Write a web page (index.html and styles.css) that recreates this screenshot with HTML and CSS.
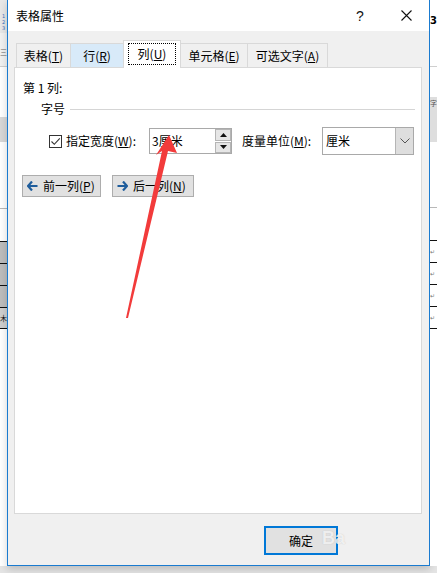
FILE: index.html
```html
<!DOCTYPE html>
<html lang="zh-CN">
<head>
<meta charset="utf-8">
<title>表格属性</title>
<link rel="stylesheet" href="styles.css">
</head>
<body>
<div class="screen">
  <div class="side side-left">
    <div class="s-ruler"><span>1</span><span>2</span><span>3</span></div>
    <div class="s-top2"><span class="s-glyph">三</span></div>
    <div class="s-line"></div>
    <div class="s-white h50"></div>
    <div class="s-band"></div>
    <div class="s-white h66"></div>
    <div class="s-line dark1"></div>
    <div class="s-white h32"></div>
    <div class="s-rule"></div>
    <div class="s-cell gray"></div>
    <div class="s-rule"></div>
    <div class="s-cell gray"></div>
    <div class="s-rule"></div>
    <div class="s-cell gray"></div>
    <div class="s-rule"></div>
    <div class="s-cell light"><span class="s-mu">木</span></div>
    <div class="s-rule"></div>
    <div class="s-rest"></div>
  </div>

  <div class="dialog">
    <div class="titlebar">
      <span class="title">表格属性</span>
      <span class="tb-btn help">?</span>
      <span class="tb-btn close">
        <svg width="11" height="11" viewBox="0 0 11 11"><path d="M0.5 0.5 L10.5 10.5 M10.5 0.5 L0.5 10.5" stroke="#111" stroke-width="1.1" fill="none"/></svg>
      </span>
    </div>
    <div class="body">
      <div class="tabs">
        <div class="tab t1"><span>表格(<u>T</u>)</span></div>
        <div class="tab t2 hover"><span>行(<u>R</u>)</span></div>
        <div class="tab t3 active"><span class="focus"><span>列(<u>U</u>)</span></span></div>
        <div class="tab t4"><span>单元格(<u>E</u>)</span></div>
        <div class="tab t5"><span>可选文字(<u>A</u>)</span></div>
      </div>
      <div class="panel">
        <div class="colhead">第 1 列:</div>
        <div class="group"><span>字号</span><span class="group-line"></span></div>
        <div class="row">
          <span class="checkbox">
            <svg width="11" height="11" viewBox="0 0 11 11"><path d="M1.5 5.5 L4.3 8.3 L9.8 2.3" stroke="#333" stroke-width="1.1" fill="none"/></svg>
          </span>
          <span class="lbl lbl1">指定宽度(<u>W</u>):</span>
          <span class="spin">
            <span class="spin-val">3厘米</span>
            <span class="spin-btns">
              <span class="sb"><svg width="7" height="4" viewBox="0 0 7 4"><path d="M0 4 L3.5 0 L7 4 Z" fill="#111"/></svg></span>
              <span class="sb"><svg width="7" height="4" viewBox="0 0 7 4"><path d="M0 0 L3.5 4 L7 0 Z" fill="#111"/></svg></span>
            </span>
          </span>
          <span class="lbl lbl2">度量单位(<u>M</u>):</span>
          <span class="select">
            <span class="sel-val">厘米</span>
            <span class="sel-btn"><svg width="10" height="6" viewBox="0 0 10 6"><path d="M0.5 0.5 L5 5 L9.5 0.5" stroke="#555" stroke-width="1" fill="none"/></svg></span>
          </span>
        </div>
        <div class="navrow">
          <span class="navbtn prev">
            <svg class="ico" width="11" height="10" viewBox="0 0 11 10"><path d="M5 0.5 L1 5 L5 9.5 M1 5 L10.5 5" stroke="#1f5d9c" stroke-width="2.2" fill="none"/></svg>
            <span class="navtxt">前一列(<u>P</u>)</span>
          </span>
          <span class="navbtn next">
            <svg class="ico" width="11" height="10" viewBox="0 0 11 10"><path d="M6 0.5 L10 5 L6 9.5 M10 5 L0.5 5" stroke="#1f5d9c" stroke-width="2.2" fill="none"/></svg>
            <span class="navtxt">后一列(<u>N</u>)</span>
          </span>
        </div>
      </div>
      <div class="footer">
        <span class="okbtn">确定</span>
      </div>
    </div>
  </div>

  <div class="side side-right">
    <div class="r-top"><span class="r-blob">3</span></div>
    <div class="s-line"></div>
    <div class="s-white h30"></div>
    <div class="r-band"><span class="r-glyph">字</span></div>
    <div class="s-white h65"></div>
    <div class="s-line dark1"></div>
    <div class="s-white h32"></div>
    <div class="s-rule"></div>
    <div class="r-cell"><span>↵</span></div>
    <div class="s-rule"></div>
    <div class="r-cell"><span>↵</span></div>
    <div class="s-rule"></div>
    <div class="r-cell"><span>↵</span></div>
    <div class="s-rule"></div>
    <div class="r-cell"><span>↵</span></div>
    <div class="s-rule"></div>
    <div class="s-rest"></div>
  </div>
</div>

<div class="watermark">Ba</div>

<svg class="arrow" width="437" height="573" viewBox="0 0 437 573">
  <polygon points="169,135 177,153 168,151 128,318 126,318 162,151 156,155" fill="#f23b3b"/>
</svg>
</body>
</html>
```

FILE: styles.css
```css
* { box-sizing: border-box; }

body {
  margin: 0;
  width: 437px;
  height: 573px;
  overflow: hidden;
  position: relative;
  background: #e4e4e4;
  font-family: "Noto Sans CJK SC", "Microsoft YaHei", sans-serif;
  font-size: 12px;
  color: #000;
}

u { text-decoration: underline; text-underline-offset: 1px; }

.screen {
  display: flex;
  height: 573px;
}

/* background document strips */
.side {
  width: 7px;
  flex: none;
  display: flex;
  flex-direction: column;
  height: 566px;
  background: #fff;
  overflow: hidden;
}

.s-ruler {
  height: 33px;
  background: #e8e8e8;
  display: flex;
  flex-direction: column;
  align-items: center;
  padding-top: 13px;
  font-family: "DejaVu Sans", sans-serif;
  font-size: 5px;
  line-height: 6px;
  color: #3a6fc0;
}
.s-top2 {
  height: 33px;
  background: #f2f2f2;
  display: flex;
  align-items: flex-start;
  padding-top: 15px;
}
.s-glyph {
  font-size: 7px;
  line-height: 8px;
  color: #666;
}
.s-line { height: 1px; background: #cfcfcf; }
.s-line.dark1 { background: #b8b8b8; }
.s-white { background: #fff; }
.h30 { height: 30px; }
.h32 { height: 32px; }
.h50 { height: 50px; }
.h65 { height: 65px; }
.h66 { height: 66px; }
.s-band { height: 25px; background: #d8d8d8; }
.s-rule { height: 1px; background: #111; }
.s-cell { height: 21px; }
.s-cell.gray { background: #bdbdbd; }
.s-cell.light {
  height: 20px;
  background: #cfcfcf;
  font-size: 7px;
  line-height: 20px;
  overflow: hidden;
}
.s-mu { color: #111; }
.s-rest { flex: 1; background: #fff; }

.r-top {
  height: 66px;
  background: #fff;
  padding-top: 12px;
}
.r-blob {
  display: block;
  font-family: "DejaVu Sans", sans-serif;
  font-weight: bold;
  font-size: 10px;
  line-height: 18px;
  color: #000;
}
.r-band {
  height: 45px;
  background: #dedede;
  font-size: 7px;
  line-height: 12px;
  color: #555;
  overflow: hidden;
}
.r-cell {
  height: 21px;
  background: #fff;
  font-family: "DejaVu Sans", sans-serif;
  font-size: 6px;
  line-height: 21px;
  color: #777;
  overflow: hidden;
}

/* dialog */
.dialog {
  width: 423px;
  height: 566px;
  flex: none;
  border: 1px solid #1a7bd0;
  border-top: none;
  background: #f0f0f0;
  display: flex;
  flex-direction: column;
  box-shadow: 0 3px 8px rgba(0, 0, 0, 0.18);
}

.titlebar {
  height: 31px;
  flex: none;
  background: #fff;
  display: flex;
  align-items: center;
  padding-left: 8px;
}
.title {
  flex: 1;
  font-size: 12px;
  line-height: 16px;
}
.tb-btn {
  width: 46px;
  height: 31px;
  display: flex;
  align-items: center;
  justify-content: center;
}
.help {
  font-family: "Liberation Sans", sans-serif;
  font-size: 14px;
  color: #111;
}

.body {
  flex: 1;
  display: flex;
  flex-direction: column;
  padding: 9px 7px 0 6px;
}

.tabs {
  height: 27px;
  display: flex;
  align-items: flex-end;
  padding-left: 2px;
  position: relative;
  z-index: 1;
}
.tab {
  height: 24px;
  border: 1px solid #d9d9d9;
  border-bottom: none;
  background: #f0f0f0;
  display: flex;
  align-items: center;
  justify-content: center;
  line-height: 16px;
  margin-left: -1px;
  padding-top: 1px;
  white-space: nowrap;
}
.tab.t1 { width: 55px; margin-left: 0; }
.tab.t2 { width: 54px; }
.tab.t3 { width: 58px; }
.tab.t4 { width: 68px; }
.tab.t5 { width: 81px; }
.tab.hover { background: #d8eaf9; }
.tab.active {
  height: 28px;
  margin-bottom: -1px;
  background: #fff;
  padding-top: 0;
  padding-bottom: 2px;
}
.focus {
  width: 48px;
  height: 22px;
  border: 1px dotted #000;
  display: flex;
  align-items: center;
  justify-content: center;
}

.panel {
  height: 447px;
  flex: none;
  border: 1px solid #d9d9d9;
  background: #fff;
  display: flex;
  flex-direction: column;
}

.colhead {
  margin: 12px 0 0 8px;
  line-height: 16px;
}

.group {
  display: flex;
  align-items: center;
  height: 16px;
  margin: 5px 6px 0 26px;
  line-height: 16px;
}
.group-line {
  flex: 1;
  height: 1px;
  background: #d5d5d5;
  margin-left: 5px;
}

.row {
  display: flex;
  align-items: center;
  height: 28px;
  margin-top: 10px;
  padding-left: 34px;
}
.checkbox {
  width: 13px;
  height: 13px;
  border: 1px solid #333;
  background: #fff;
  display: flex;
  align-items: center;
  justify-content: center;
}
.lbl { line-height: 16px; white-space: nowrap; }
.lbl1 { width: 87px; padding-left: 4px; }
.lbl2 { width: 90px; padding-left: 10px; }

.spin {
  width: 83px;
  height: 26px;
  border: 1px solid #a9a9a9;
  background: #fff;
  display: flex;
  align-items: center;
  padding-left: 2px;
}
.spin-val { flex: 1; line-height: 16px; }
.spin-btns {
  width: 16px;
  height: 24px;
  display: flex;
  flex-direction: column;
  gap: 1px;
}
.sb {
  flex: 1;
  background: #e6e6e6;
  border: 1px solid #b5b5b5;
  display: flex;
  align-items: center;
  justify-content: center;
}

.select {
  width: 92px;
  height: 28px;
  border: 1px solid #a9a9a9;
  background: #fff;
  display: flex;
  align-items: stretch;
}
.sel-val {
  flex: 1;
  display: flex;
  align-items: center;
  padding-left: 3px;
  line-height: 16px;
}
.sel-btn {
  width: 18px;
  background: #dedede;
  border-left: 1px solid #b5b5b5;
  display: flex;
  align-items: center;
  justify-content: center;
}

.navrow {
  display: flex;
  gap: 11px;
  margin-top: 20px;
  padding-left: 7px;
}
.navbtn {
  height: 22px;
  background: #e1e1e1;
  border: 1px solid #adadad;
  display: flex;
  align-items: center;
  padding-left: 4px;
  line-height: 16px;
  gap: 5px;
  white-space: nowrap;
}
.navbtn.prev { width: 79px; }
.navbtn.next { width: 82px; }

.footer {
  display: flex;
  justify-content: flex-end;
  padding-top: 12px;
  padding-right: 84px;
}
.okbtn {
  width: 74px;
  height: 29px;
  border: 2px solid #0078d7;
  background: #e1e1e1;
  display: flex;
  align-items: center;
  justify-content: center;
  line-height: 16px;
}

/* overlays */
.watermark {
  position: absolute;
  left: 322px;
  top: 528px;
  font-family: "Liberation Sans", sans-serif;
  font-weight: bold;
  font-size: 18px;
  color: rgba(255, 255, 255, 0.75);
  text-shadow: 0 0 1px rgba(150, 150, 150, 0.5);
  pointer-events: none;
}

.arrow {
  position: absolute;
  left: 0;
  top: 0;
  pointer-events: none;
}
```
